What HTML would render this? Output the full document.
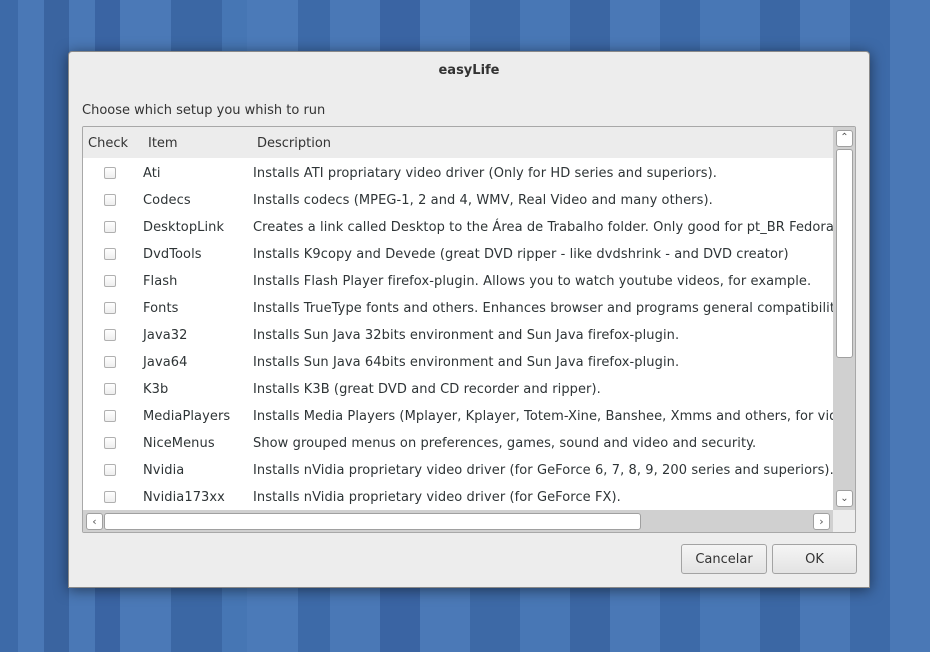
<!DOCTYPE html>
<html><head><style>
body{margin:0;width:930px;height:652px;overflow:hidden;font-family:"DejaVu Sans","Liberation Sans",sans-serif;position:relative;
background:linear-gradient(90deg,#3d6aa8 0,#3d6aa8 18px,#4a78b6 18px,#4a78b6 44px,#3a64a0 44px,#3a64a0 69px,#4a78b6 69px,#4a78b6 95px,#3a64a3 95px,#3a64a3 120px,#4b79b7 120px,#4b79b7 171px,#3b67a4 171px,#3b67a4 222px,#4676b4 222px,#4676b4 247px,#4b7ab8 247px,#4b7ab8 298px,#3d6aa8 298px,#3d6aa8 330px,#4a78b6 330px,#4a78b6 380px,#3a64a3 380px,#3a64a3 420px,#4b79b7 420px,#4b79b7 470px,#3d69a6 470px,#3d69a6 520px,#4877b5 520px,#4877b5 570px,#3b66a3 570px,#3b66a3 610px,#4a78b6 610px,#4a78b6 660px,#3d6aa8 660px,#3d6aa8 700px,#4877b5 700px,#4877b5 760px,#3b67a4 760px,#3b67a4 800px,#4a78b6 800px,#4a78b6 850px,#3d6aa8 850px,#3d6aa8 890px,#4a78b6 890px);}
.dlg{position:absolute;left:68px;top:51px;width:800px;height:535px;background:#ededed;border:1px solid #8a8a8a;border-radius:4px 4px 0 0;box-shadow:0 2px 14px rgba(0,0,0,.5);}
.title{position:absolute;left:0;right:0;top:11px;text-align:center;font-weight:bold;font-size:13px;color:#333}
.lbl{position:absolute;left:13px;top:51px;font-size:13px;color:#333}
.tree{position:absolute;left:13px;top:74px;width:772px;height:405px;border:1px solid #a8a8a8;background:#fff;border-radius:2px;overflow:hidden}
.hdr{position:absolute;left:0;top:0;width:750px;height:31px;background:#ececec;font-size:13px;color:#333}
.hdr span{position:absolute;top:9px}
.row{position:absolute;left:0;height:27px;width:750px;font-size:13px;color:#2e3436;white-space:nowrap;letter-spacing:0.08px}
.row .cb{position:absolute;left:21px;top:7px;width:10px;height:10px;border:1px solid #b0b0b0;border-radius:2px;background:linear-gradient(#fff,#eee)}
.row .it{position:absolute;left:60px;top:6px}
.row .ds{position:absolute;left:170px;top:6px}
.vs{position:absolute;left:750px;top:0;width:22px;height:383px;background:#d0d0d0}
.hs{position:absolute;left:0;top:383px;width:750px;height:22px;background:#d0d0d0}
.corner{position:absolute;left:750px;top:383px;width:22px;height:22px;background:#ededed}
.btn{position:absolute;background:#fff;border:1px solid #a0a0a0;border-radius:3px;box-sizing:border-box}
.b{position:absolute;height:30px;top:492px;border:1px solid #a3a3a3;border-radius:3px;background:linear-gradient(#f5f5f5,#e3e3e3);font-size:13px;color:#333;text-align:center;line-height:29px;box-sizing:border-box}
</style></head><body>
<div class="dlg">
<div class="title">easyLife</div>
<div class="lbl">Choose which setup you whish to run</div>
<div class="tree">
<div class="hdr"><span style="left:5px">Check</span><span style="left:65px">Item</span><span style="left:174px">Description</span></div>
<div class="row" style="top:33px"><div class="cb"></div><span class="it">Ati</span><span class="ds">Installs ATI propriatary video driver (Only for HD series and superiors).</span></div>
<div class="row" style="top:60px"><div class="cb"></div><span class="it">Codecs</span><span class="ds">Installs codecs (MPEG-1, 2 and 4, WMV, Real Video and many others).</span></div>
<div class="row" style="top:87px"><div class="cb"></div><span class="it">DesktopLink</span><span class="ds">Creates a link called Desktop to the Área de Trabalho folder. Only good for pt_BR Fedora</span></div>
<div class="row" style="top:114px"><div class="cb"></div><span class="it">DvdTools</span><span class="ds">Installs K9copy and Devede (great DVD ripper - like dvdshrink - and DVD creator)</span></div>
<div class="row" style="top:141px"><div class="cb"></div><span class="it">Flash</span><span class="ds">Installs Flash Player firefox-plugin. Allows you to watch youtube videos, for example.</span></div>
<div class="row" style="top:168px"><div class="cb"></div><span class="it">Fonts</span><span class="ds">Installs TrueType fonts and others. Enhances browser and programs general compatibility</span></div>
<div class="row" style="top:195px"><div class="cb"></div><span class="it">Java32</span><span class="ds">Installs Sun Java 32bits environment and Sun Java firefox-plugin.</span></div>
<div class="row" style="top:222px"><div class="cb"></div><span class="it">Java64</span><span class="ds">Installs Sun Java 64bits environment and Sun Java firefox-plugin.</span></div>
<div class="row" style="top:249px"><div class="cb"></div><span class="it">K3b</span><span class="ds">Installs K3B (great DVD and CD recorder and ripper).</span></div>
<div class="row" style="top:276px"><div class="cb"></div><span class="it">MediaPlayers</span><span class="ds">Installs Media Players (Mplayer, Kplayer, Totem-Xine, Banshee, Xmms and others, for vid</span></div>
<div class="row" style="top:303px"><div class="cb"></div><span class="it">NiceMenus</span><span class="ds">Show grouped menus on preferences, games, sound and video and security.</span></div>
<div class="row" style="top:330px"><div class="cb"></div><span class="it">Nvidia</span><span class="ds">Installs nVidia proprietary video driver (for GeForce 6, 7, 8, 9, 200 series and superiors).</span></div>
<div class="row" style="top:357px"><div class="cb"></div><span class="it">Nvidia173xx</span><span class="ds">Installs nVidia proprietary video driver (for GeForce FX).</span></div>
<div class="vs">
 <div class="btn" style="left:3px;top:3px;width:17px;height:17px;font-size:10px;text-align:center;line-height:14px;color:#555">&#8963;</div>
 <div class="btn" style="left:3px;top:22px;width:17px;height:209px"></div>
 <div class="btn" style="left:3px;top:363px;width:17px;height:17px;font-size:10px;text-align:center;line-height:16px;color:#555">&#8964;</div>
</div>
<div class="hs">
 <div class="btn" style="left:3px;top:3px;width:17px;height:17px;font-size:11px;text-align:center;line-height:15px;color:#555">&lsaquo;</div>
 <div class="btn" style="left:21px;top:3px;width:537px;height:17px"></div>
 <div class="btn" style="left:730px;top:3px;width:17px;height:17px;font-size:11px;text-align:center;line-height:15px;color:#555">&rsaquo;</div>
</div>
<div class="corner"></div>
</div>
<div class="b" style="left:612px;width:86px">Cancelar</div>
<div class="b" style="left:703px;width:85px">OK</div>
</div>
</body></html>
